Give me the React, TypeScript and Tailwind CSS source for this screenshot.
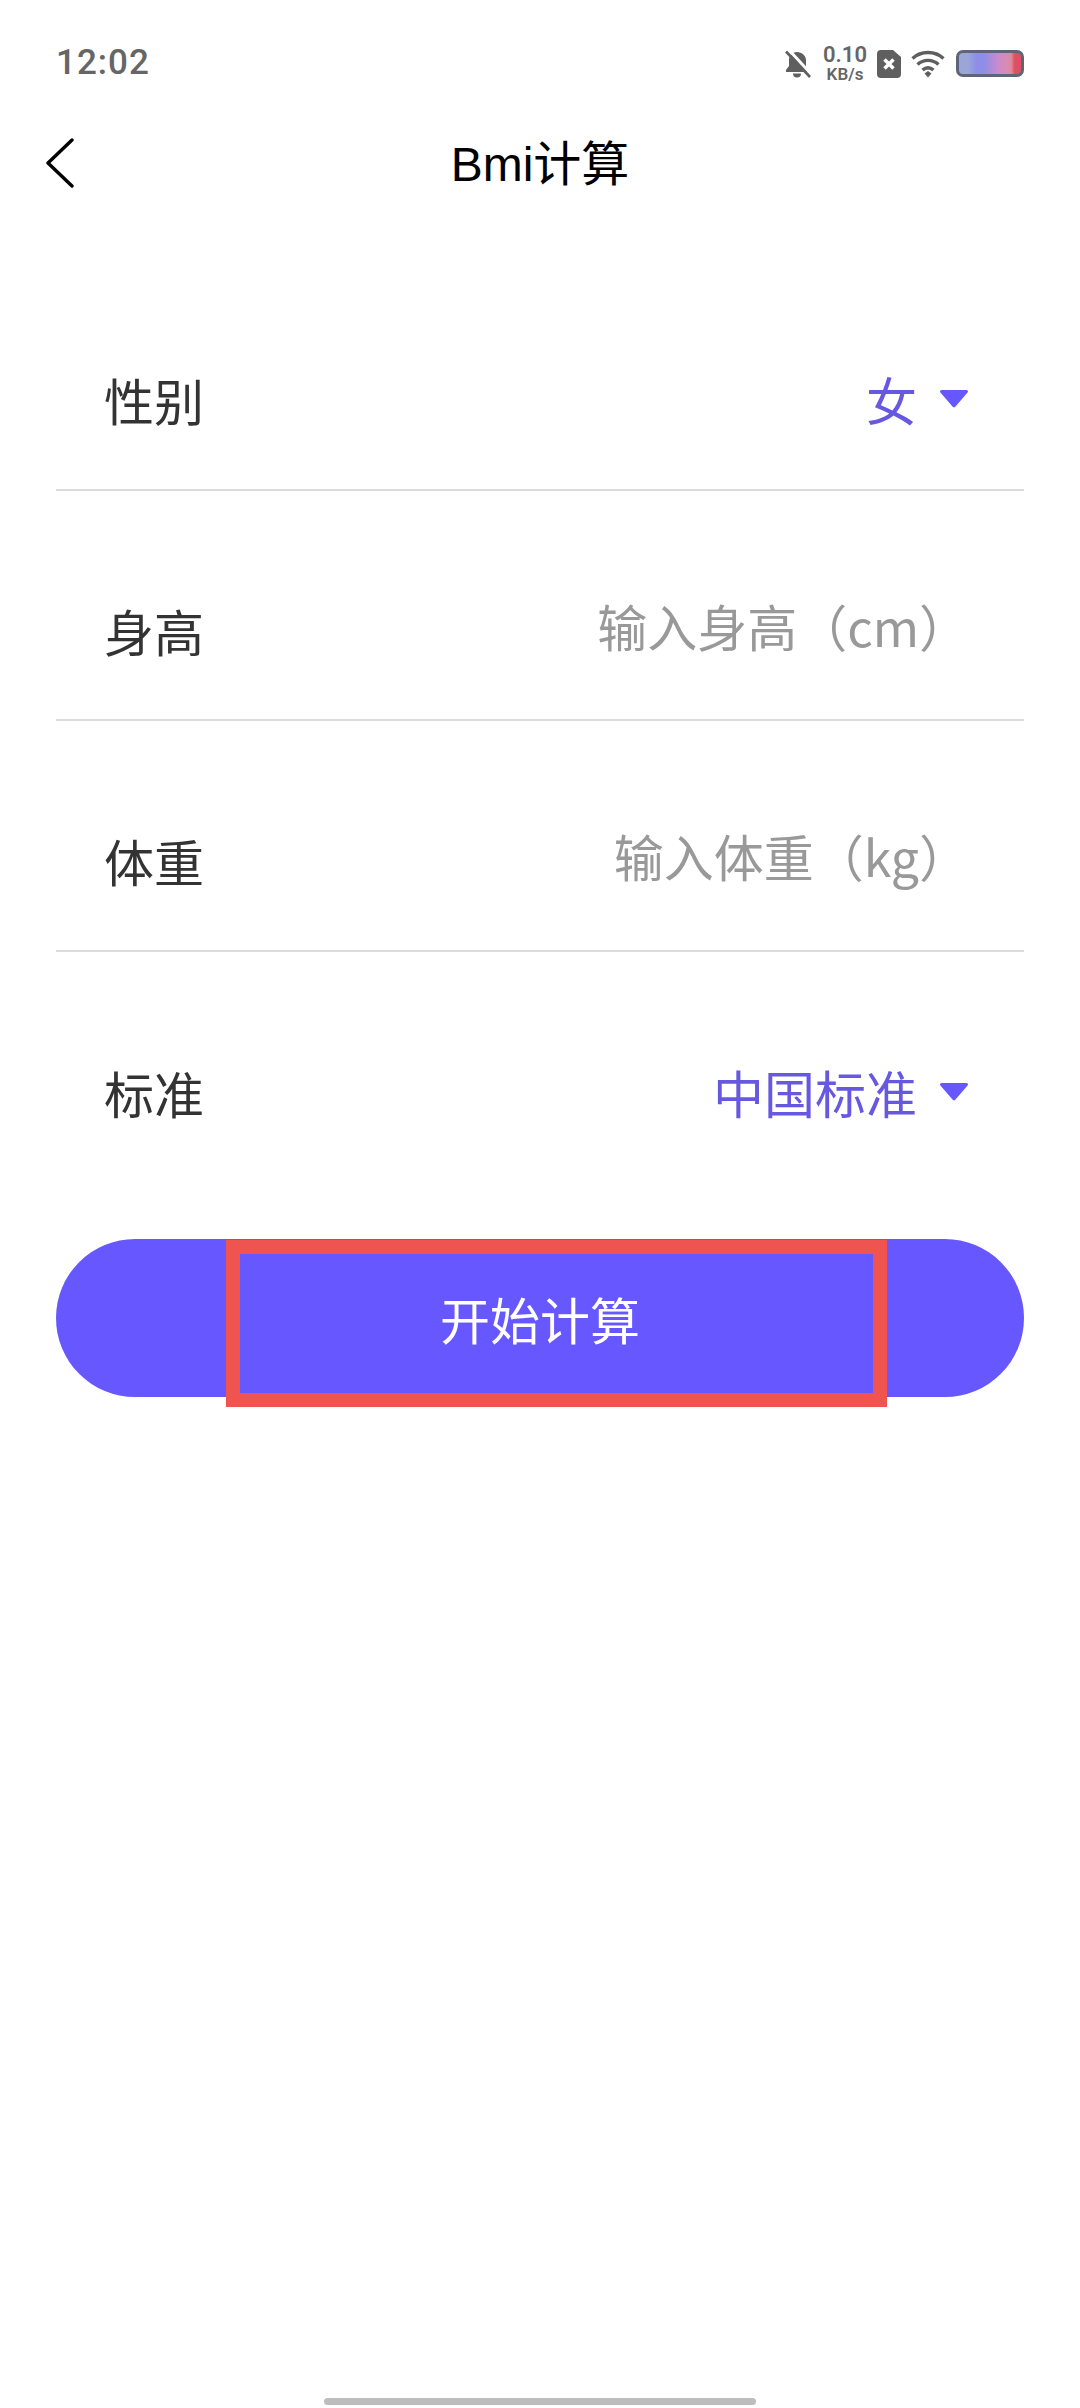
import React from "react";

const font = { fontFamily: '"Noto Sans CJK SC", "Noto Sans", sans-serif' };

function Caret() {
  return (
    <svg width="28" height="18" viewBox="0 0 28 18" className="ml-[23px] mr-[1px] shrink-0">
      <path d="M1.500 0H26.500a1.500 1.500 0 0 1 1.100 2.500L15.500 16.500a2 2 0 0 1-3 0L0.400 2.500A1.500 1.500 0 0 1 1.500 0Z" fill="#6658fe" />
    </svg>
  );
}

function Row({ label, children, border = true }: { label: string; children: React.ReactNode; border?: boolean }) {
  return (
    <div className={`mx-[56px] h-[230.5px] pt-[50px] pl-[48px] pr-[55px] flex items-center justify-between ${border ? "border-b-2 border-[#dcdcdc]" : ""}`}>
      <span className="text-[50px] leading-[60px] text-[#333333]">{label}</span>
      {children}
    </div>
  );
}

export default function App() {
  return (
    <div className="relative w-[1080px] h-[2408px] bg-white overflow-hidden" style={font}>
      {/* status bar */}
      <div className="h-[127px] pl-[56px] pr-[56px] flex items-center justify-between">
        <span className="text-[35px] font-medium text-[#666666] tracking-[1px]" style={{ fontFamily: '"Roboto", sans-serif' }}>12:02</span>
        <div className="flex items-center">
          <svg width="28" height="28" viewBox="0 0 28 28" className="mr-[12px]">
            <path d="M13 2C8 2 5 6 5 10v6l-3 4v2h22v-2l-2-3V10c0-4-4-8-9-8z" fill="#5f5f5f" />
            <path d="M9 23.500h8a4 4 0 0 1-8 0z" fill="#5f5f5f" />
            <path d="M5 0L27 24" stroke="#ffffff" strokeWidth="3" />
            <path d="M2 1.500L26 27" stroke="#5f5f5f" strokeWidth="2.600" />
          </svg>
          <div className="flex flex-col items-center w-[42px] text-[#666666] font-semibold mr-[11px]" style={{ fontFamily: '"Roboto", sans-serif' }}>
            <span className="text-[22px] leading-[22px]">0.10</span>
            <span className="text-[17px] leading-[17px]">KB/s</span>
          </div>
          <svg width="24" height="28" viewBox="0 0 24 28" className="mr-[10px]">
            <path d="M4 0H16L24 7V24a4 4 0 0 1-4 4H4a4 4 0 0 1-4-4V4a4 4 0 0 1 4-4z" fill="#5f5f5f" />
            <path d="M7.500 9.500l9 9M16.500 9.500l-9 9" stroke="#ffffff" strokeWidth="3.500" />
          </svg>
          <svg width="34" height="28" viewBox="0 0 34 28" className="mr-[11px]" fill="none" stroke="#5f5f5f" strokeWidth="3.400">
            <path d="M1.500 8.500C10 .5 24 .5 32.500 8.500" />
            <path d="M6.500 14.500C12.500 9 21.500 9 27.500 14.500" />
            <path d="M11.500 20C15 17 19 17 22.500 20" />
            <path d="M13.500 23.500L17 21L20.500 23.500L17 27.500Z" fill="#5f5f5f" stroke="none" />
          </svg>
          <div className="w-[68px] h-[27px] rounded-[7px] border-[3px] border-[#5f6478] bg-[linear-gradient(90deg,#9aa6d8_0%,#9aa6d8_15%,#8e8ee8_28%,#8e8ee8_40%,#a88cdc_50%,#c98ad0_62%,#d98bb0_78%,#dd8a9c_84%,#dd4f62_90%,#dd4f62_100%)]" />
        </div>
      </div>

      {/* title bar */}
      <div className="relative h-[76px] flex items-center justify-center">
        <svg width="30" height="50" viewBox="0 0 30 50" className="absolute left-[45px] top-[11px]" fill="none" stroke="#000000" strokeWidth="3.400" strokeLinecap="round" strokeLinejoin="round">
          <path d="M27 2L3 25L27 48" />
        </svg>
        <span className="text-[48px] leading-[60px] text-black" style={{ fontFamily: '"Liberation Sans", "Noto Sans CJK SC", sans-serif' }}>Bmi计算</span>
      </div>

      {/* form */}
      <div className="mt-[57px]">
        <Row label="性别">
          <div className="flex items-center">
            <span className="text-[51px] leading-[60px] text-[#6658e0]">女</span>
            <Caret />
          </div>
        </Row>
        <Row label="身高">
          <span className="text-[50px] leading-[60px] text-[#999999] mb-[10px]">输入身高（cm）</span>
        </Row>
        <Row label="体重">
          <span className="text-[50px] leading-[60px] text-[#999999] mb-[10px]">输入体重（kg）</span>
        </Row>
        <Row label="标准" border={false}>
          <div className="flex items-center">
            <span className="text-[51px] leading-[60px] text-[#6658e0]">中国标准</span>
            <Caret />
          </div>
        </Row>
      </div>

      {/* button */}
      <div className="relative mx-[56px] mt-[57px] h-[158px] rounded-[79px] bg-[#6658fe] flex items-center justify-center">
        <span className="text-[50px] leading-[60px] text-white">开始计算</span>
        <div className="absolute left-[170px] top-[1px] w-[661px] h-[167px] border-[14px] border-[#f0544e]" />
      </div>

      {/* home indicator */}
      <div className="absolute left-[324px] top-[2398px] w-[432px] h-[7px] rounded-full bg-[#bdbdbd]" />
    </div>
  );
}
